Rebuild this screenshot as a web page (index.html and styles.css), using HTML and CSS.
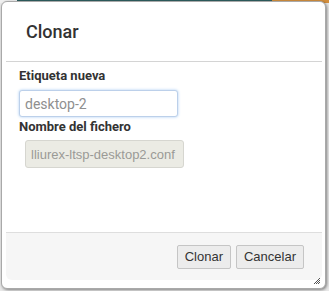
FILE: index.html
```html
<!DOCTYPE html>
<html lang="es">
<head>
  <meta charset="UTF-8" />
  <title>Clonar</title>
  <link rel="stylesheet" href="styles.css">
</head>
<body>
  <div class="topbar">
    <div class="tb-blank"></div>
    <div class="tb-teal"></div>
    <div class="tb-orange"></div>
  </div>

  <div class="dialog">
    <div class="dialog-inner">
      <div class="dialog-title">Clonar</div>

      <div class="dialog-body">
        <label class="field-label" for="newLabel">Etiqueta nueva</label>
        <input type="text" id="newLabel" class="field-input focused" placeholder="desktop-2" />
        <label class="field-label">Nombre del fichero</label>
        <input type="text" class="field-input disabled" value="lliurex-ltsp-desktop2.conf" disabled />
      </div>

      <div class="dialog-buttons">
        <button class="btn">Clonar</button>
        <button class="btn">Cancelar</button>
      </div>
    </div>
    <span class="grip">
      <svg width="8" height="8" viewBox="0 0 8 8">
        <path d="M7 1 L1 7 M7 3 L3 7 M7 5 L5 7" stroke="#555" stroke-width="1" fill="none"/>
      </svg>
    </span>
  </div>
</body>
</html>
```

FILE: styles.css
```css
body {
  margin: 0;
  width: 329px;
  height: 291px;
  background-color: #e8e8e8;
  font-family: Roboto, 'Liberation Sans', sans-serif;
  position: relative;
  overflow: hidden;
}

.topbar {
  display: flex;
  height: 3px;
}

.tb-blank {
  width: 17px;
  background-color: #f0f0f0;
}

.tb-teal {
  flex: 1;
  background-color: #2e5e5f;
}

.tb-orange {
  width: 57px;
  background-color: #d38f3e;
}

.dialog {
  position: absolute;
  left: 1px;
  top: 1px;
  width: 325px;
  height: 288px;
  background-color: #fff;
  border: 1px solid #a9a9a9;
  border-radius: 6px;
  box-shadow: 1px 1px 3px rgba(0,0,0,0.45);
  padding: 0 3px 8px 4px;
  box-sizing: border-box;
}

.dialog-inner {
  display: flex;
  flex-direction: column;
  height: 100%;
}

.dialog-title {
  font-size: 18px;
  font-weight: 500;
  color: #333;
  padding: 19px 0 0 20px;
  height: 40px;
  border-bottom: 1px solid #d4d4d4;
}

.dialog-body {
  flex: 1;
  display: flex;
  flex-direction: column;
  align-items: flex-start;
  padding: 6px 0 0 13px;
}

.field-label {
  font-size: 13px;
  font-weight: bold;
  color: #333;
  line-height: 15px;
}

.field-input {
  width: 159px;
  height: 27px;
  box-sizing: border-box;
  font-family: Roboto, 'Liberation Sans', sans-serif;
  font-size: 14px;
  padding: 0 5px;
  border-radius: 3px;
}

.field-input.focused {
  margin: 7px 0 2px 0;
  border: 1px solid #bcd0ea;
  box-shadow: 0 0 3px #a9cbf2;
  outline: none;
}

.field-input.focused::placeholder {
  color: #8f8f8f;
}

.field-input.disabled {
  margin: 6px 0 0 6px;
  height: 28px;
  font-family: 'Liberation Sans', sans-serif;
  font-size: 13px;
  border: 1px solid #d6d6d0;
  background-color: #ebebe4;
  color: #9a9a96;
}

.dialog-buttons {
  height: 47px;
  display: flex;
  justify-content: flex-end;
  align-items: center;
  gap: 5px;
  padding-right: 18px;
  background-color: #f6f6f6;
  border-top: 1px solid #dedede;
  border-radius: 0 0 6px 6px;
}

.btn {
  font-family: 'Liberation Sans', sans-serif;
  font-size: 13px;
  color: #333;
  background-color: #ececec;
  border: 1px solid #c5c5c5;
  border-radius: 2px;
  height: 24px;
  padding: 0 7px;
  cursor: pointer;
}

.grip {
  position: absolute;
  right: 4px;
  bottom: 3px;
  width: 8px;
  height: 8px;
  line-height: 0;
}
```
